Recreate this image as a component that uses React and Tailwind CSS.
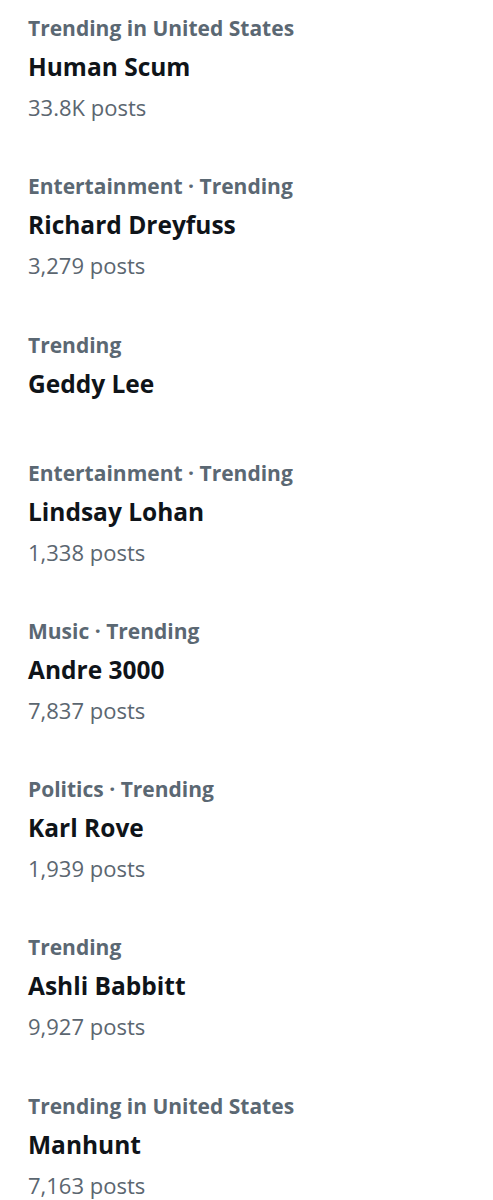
const items = [
  { cat: "Trending in United States", title: "Human Scum", posts: "33.8K posts" },
  { cat: "Entertainment · Trending", title: "Richard Dreyfuss", posts: "3,279 posts" },
  { cat: "Trending", title: "Geddy Lee", posts: null },
  { cat: "Entertainment · Trending", title: "Lindsay Lohan", posts: "1,338 posts" },
  { cat: "Music · Trending", title: "Andre 3000", posts: "7,837 posts" },
  { cat: "Politics · Trending", title: "Karl Rove", posts: "1,939 posts" },
  { cat: "Trending", title: "Ashli Babbitt", posts: "9,927 posts" },
  { cat: "Trending in United States", title: "Manhunt", posts: "7,163 posts" },
];

export default function App() {
  return (
    <div
      className="w-[493px] h-[1200px] overflow-hidden bg-white pt-[13px]"
      style={{ fontFamily: "'Open Sans', 'Noto Sans', sans-serif" }}
    >
      {items.map((it, i) => (
        <div
          key={i}
          className={`flex flex-col px-[28px] ${it.posts ? "h-[158.3px]" : "h-[128px]"}`}
        >
          <div className="text-[21px] leading-[30px] font-bold text-[#5b6873] whitespace-nowrap">
            {it.cat}
          </div>
          <div className="mt-[9px] text-[24.5px] leading-[30px] font-bold text-[#0f1419] whitespace-nowrap">
            {it.title}
          </div>
          {it.posts && (
            <div className="mt-[10px] text-[22px] leading-[30px] text-[#5b6670] whitespace-nowrap">
              {it.posts}
            </div>
          )}
        </div>
      ))}
    </div>
  );
}
